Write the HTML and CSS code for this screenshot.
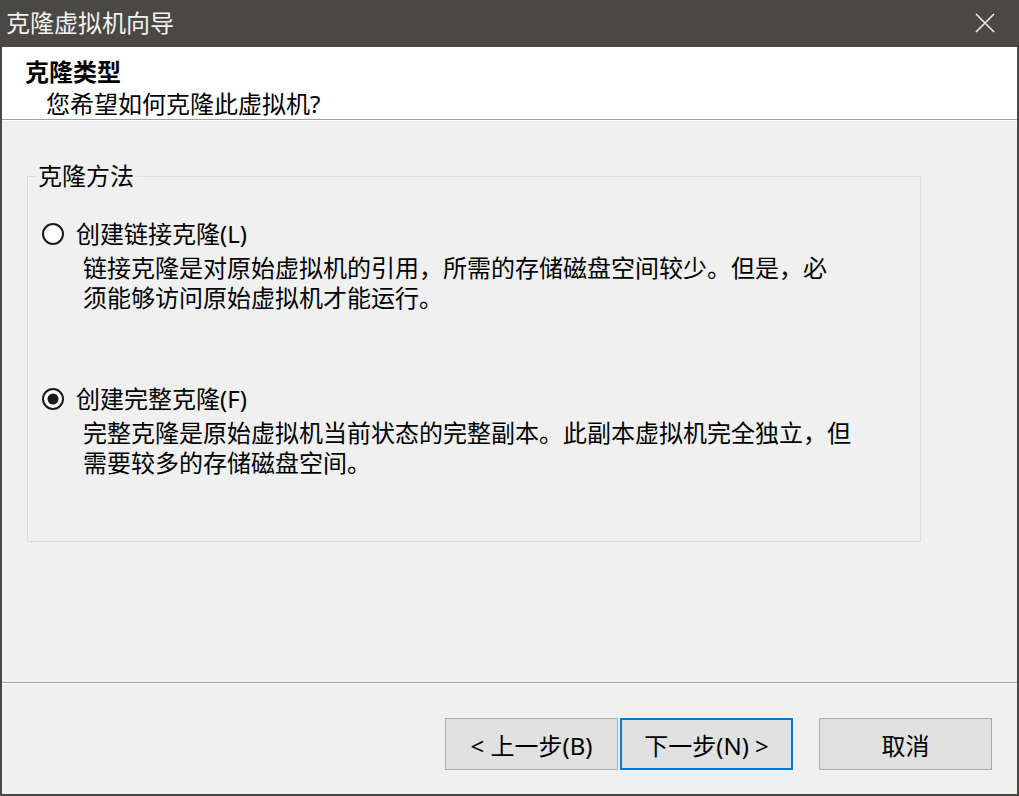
FILE: index.html
```html
<!DOCTYPE html>
<html lang="zh-CN">
<head>
  <meta charset="UTF-8">
  <title>克隆虚拟机向导</title>
  <link rel="stylesheet" href="styles.css">
</head>
<body>
<div class="window">
    <!-- 标题栏 -->
    <div class="titlebar">
        <span class="title">克隆虚拟机向导</span>
        <svg class="close" width="20" height="20" viewBox="0 0 20 20">
            <path d="M1 1 L19 19 M19 1 L1 19" stroke="#ececec" stroke-width="1.6" fill="none"/>
        </svg>
    </div>
    <!-- 页头 -->
    <div class="header">
        <h5>克隆类型</h5>
        <p>您希望如何克隆此虚拟机?</p>
    </div>
    <!-- 内容 -->
    <div class="content">
        <fieldset class="group">
            <legend>克隆方法</legend>
            <div class="option">
                <div class="radio-row">
                    <svg class="radio" width="22" height="22" viewBox="0 0 22 22">
                        <circle cx="11" cy="11" r="10" fill="#FFF" stroke="#1a1a1a" stroke-width="2"/>
                    </svg>
                    <span>创建链接克隆(L)</span>
                </div>
                <p class="desc">链接克隆是对原始虚拟机的引用，所需的存储磁盘空间较少。但是，必<br>须能够访问原始虚拟机才能运行。</p>
            </div>
            <div class="option second">
                <div class="radio-row">
                    <svg class="radio" width="22" height="22" viewBox="0 0 22 22">
                        <circle cx="11" cy="11" r="10" fill="#FFF" stroke="#1a1a1a" stroke-width="2"/>
                        <circle cx="11" cy="11" r="5.5" fill="#1a1a1a"/>
                    </svg>
                    <span>创建完整克隆(F)</span>
                </div>
                <p class="desc">完整克隆是原始虚拟机当前状态的完整副本。此副本虚拟机完全独立，但<br>需要较多的存储磁盘空间。</p>
            </div>
        </fieldset>
    </div>
    <!-- 按钮 -->
    <div class="footer">
        <button class="btn">&lt; 上一步(B)</button>
        <button class="btn focus">下一步(N) &gt;</button>
        <button class="btn cancel">取消</button>
    </div>
</div>
</body>
</html>
```

FILE: styles.css
```css
body {
  margin: 0;
  padding: 0;
  font-family: "Noto Sans", "Noto Sans CJK SC", sans-serif;
  font-size: 24px;
  color: #000;
}

.window {
  width: 1019px;
  height: 796px;
  box-sizing: border-box;
  border: 2px solid #4a4845;
  border-top: none;
  background-color: #F0F0F0;
  display: flex;
  flex-direction: column;
}

.titlebar {
  height: 47px;
  flex-shrink: 0;
  background-color: #4a4845;
  color: #f2f2f2;
  display: flex;
  align-items: center;
  justify-content: space-between;
  padding: 0 22px 0 4px;
}

.title {
  line-height: 30px;
  margin-top: -1px;
}

.close {
  display: block;
  margin-top: -2px;
}

.header {
  height: 62px;
  flex-shrink: 0;
  background-color: #FFF;
  border-bottom: 1px solid #a0a0a0;
  box-shadow: 0 1px 0 #FFF;
  padding: 10px 0 0 23px;
  box-sizing: content-box;
}

.header h5 {
  font-size: 24px;
  line-height: 30px;
  margin: 0;
  font-weight: bold;
}

.header p {
  line-height: 30px;
  margin: 2px 0 0 21px;
}

.content {
  flex: 1;
  padding: 41px 0 0 25px;
}

.group {
  width: 894px;
  box-sizing: border-box;
  margin: 0;
  padding: 0 0 63px 0;
  border: 1px solid #dcdcdc;
}

.group legend {
  line-height: 30px;
  padding: 0 3px;
  margin-left: 7px;
}

.option {
  padding-left: 14px;
  margin-top: 28px;
}

.option.second {
  margin-top: 71px;
}

.radio-row {
  display: flex;
  align-items: center;
  line-height: 30px;
}

.radio {
  flex: none;
  display: block;
  margin-right: 12px;
}

.desc {
  line-height: 30px;
  margin: 4px 0 0 41px;
}

.footer {
  flex-shrink: 0;
  border-top: 1px solid #a0a0a0;
  box-shadow: inset 0 1px 0 #FFF;
  padding: 35px 25px 24px 0;
  display: flex;
  justify-content: flex-end;
}

.btn {
  width: 173px;
  height: 52px;
  box-sizing: border-box;
  border: 1px solid #adadad;
  background-color: #e1e1e1;
  font-family: inherit;
  font-size: 24px;
  color: #000;
  padding: 0;
}

.btn.focus {
  border: 2px solid #0078d7;
  margin-left: 2px;
}

.btn.cancel {
  margin-left: 26px;
}
```
